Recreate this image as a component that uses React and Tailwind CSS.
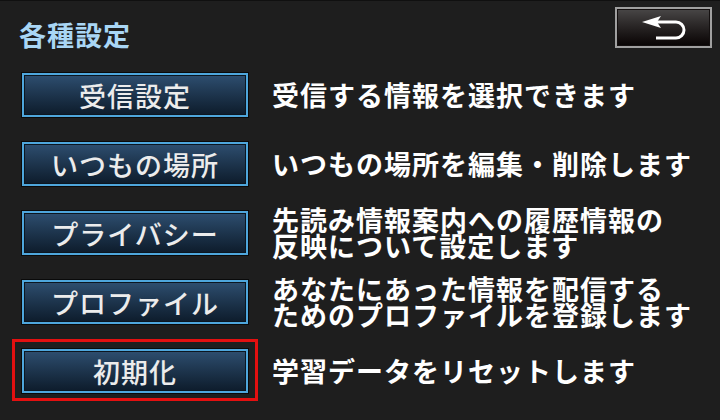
import React from 'react';

const items = [
  { label: '受信設定', desc: ['受信する情報を選択できます'] },
  { label: 'いつもの場所', desc: ['いつもの場所を編集・削除します'] },
  { label: 'プライバシー', desc: ['先読み情報案内への履歴情報の', '反映について設定します'] },
  { label: 'プロファイル', desc: ['あなたにあった情報を配信する', 'ためのプロファイルを登録します'] },
  { label: '初期化', desc: ['学習データをリセットします'], selected: true },
];

function MenuButton({ label }) {
  return (
    <div className="w-[228px] h-[46px] border border-[#0a0a0a] shrink-0">
      <div className="w-full h-full border-2 border-[#4ea6dc]">
        <div className="w-full h-full border border-[#0c1620] bg-gradient-to-b from-[#2d4d6e] to-[#0e1d2d] flex items-center justify-center text-[27px] font-medium text-[#ececec] leading-none tracking-[1px]">
          {label}
        </div>
      </div>
    </div>
  );
}

export default function App() {
  return (
    <div
      className="w-[720px] h-[420px] bg-[#1e1e1e] border-t border-[#101010] overflow-hidden"
      style={{ fontFamily: '"Noto Sans CJK JP", "Noto Sans", sans-serif' }}
    >
      {/* Header */}
      <div className="flex justify-between items-start pl-[19px] pr-[8px] pt-[6px]">
        <h1 className="mt-[14px] text-[27px] font-bold text-[#a9d6f5] leading-none tracking-[1px]">各種設定</h1>
        <button className="w-[97px] h-[41px] border-2 border-[#a0a0a0] shrink-0">
          <div className="w-full h-full border border-[#141010] bg-gradient-to-b from-[#474545] to-[#0a0606] flex items-center justify-center">
            <svg width="44" height="24" viewBox="0 0 44 24">
              <polygon points="0,6 19,0 15,6 19,12" fill="#fff" />
              <path d="M15 6 H34 a8 8 0 0 1 0 16 H14" fill="none" stroke="#fff" strokeWidth="3" />
            </svg>
          </div>
        </button>
      </div>

      {/* Rows */}
      <div className="flex flex-col gap-[23px] pl-[21px] mt-[24px]">
        {items.map((item) => (
          <div key={item.label} className="flex items-center gap-[23px] h-[46px]">
            <div className="relative">
              {item.selected && (
                <span className="absolute -left-[9px] -top-[9px] -right-[9px] -bottom-[7px] border-[3px] border-[#e41010]" />
              )}
              <MenuButton label={item.label} />
            </div>
            <div className="text-white font-bold text-[27px] leading-[26px] tracking-[1px] whitespace-nowrap">
              {item.desc.map((line) => (
                <div key={line}>{line}</div>
              ))}
            </div>
          </div>
        ))}
      </div>
    </div>
  );
}
